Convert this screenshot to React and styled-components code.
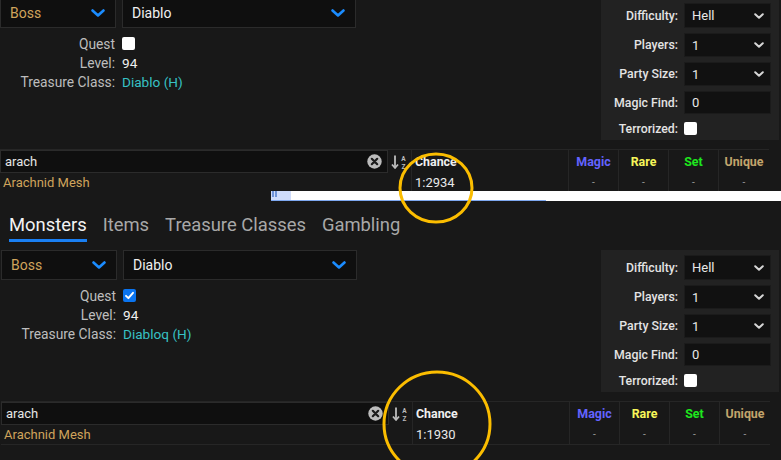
import React from 'react';
import styled, { createGlobalStyle } from 'styled-components';

const Global = createGlobalStyle`
  html, body { margin: 0; padding: 0; background: #181818; }
  body {
    font-family: Roboto, "Noto Sans", "Liberation Sans", sans-serif;
    font-size: 13px;
    color: #c4c4c4;
    overflow: hidden;
  }
  * { box-sizing: border-box; }
`;

const Page = styled.div`
  position: relative;
  width: 781px;
  height: 460px;
  overflow: hidden;
  background: #181818;
  display: flex;
  flex-direction: column;
`;

const Shot = styled.section`
  flex: none;
  height: ${(p) => p.$h}px;
  overflow: hidden;
  padding-left: ${(p) => p.$shift || 0}px;
`;

const Body = styled.div`
  margin-top: ${(p) => p.$offset || 0}px;
  display: flex;
  flex-direction: column;
`;

/* ---------- tabs ---------- */
const TabBar = styled.nav`
  height: 49px;
  display: flex;
  align-items: flex-start;
  gap: 16px;
  padding: 12px 0 0 8px;
`;
const Tab = styled.div`
  font-size: 18.4px;
  line-height: 23px;
  padding-bottom: 3px;
  color: ${(p) => (p.$active ? '#f3f3f3' : '#a8a8a8')};
  border-bottom: 3px solid ${(p) => (p.$active ? '#1a7ff2' : 'transparent')};
`;

/* ---------- upper area ---------- */
const Upper = styled.div`
  height: 151px;
  display: flex;
  align-items: flex-start;
  justify-content: space-between;
`;
const LeftCol = styled.div`
  width: 356px;
  display: flex;
  flex-direction: column;
`;
const SelectRow = styled.div`
  display: grid;
  grid-template-columns: 116px 234px;
  column-gap: 6px;
  height: 30px;
`;
const Select = styled.div`
  display: flex;
  align-items: center;
  justify-content: space-between;
  padding: 0 10px 0 9px;
  background: #0f0f0f;
  border: 1px solid #2b2b2b;
  font-size: 14px;
  color: ${(p) => p.$color || '#f0f0f0'};
`;
const InfoGrid = styled.div`
  margin-top: 6px;
  display: grid;
  grid-template-columns: 116px auto;
  column-gap: 6px;
  grid-auto-rows: 19px;
  align-items: center;
`;
const Label = styled.div`
  text-align: right;
  padding-right: 1px;
  color: #bdbdbd;
  font-size: 13.8px;
`;
const Value = styled.div`
  display: flex;
  align-items: center;
  color: ${(p) => p.$color || '#f0f0f0'};
  font-size: 13.6px;
`;

const Panel = styled.div`
  width: 178px;
  height: 142px;
  margin-right: 2px;
  background: #222222;
  padding: 5px 8px 0 0;
  display: grid;
  grid-template-columns: 1fr 87px;
  grid-template-rows: 25px 24px 24px 23px 19px;
  column-gap: 6px;
  row-gap: 5px;
  align-items: center;
`;
const PanelLabel = styled.div`
  text-align: right;
  color: #e4e4e4;
  font-size: 12.3px;
  font-weight: 500;
`;
const SmallSelect = styled.div`
  height: 100%;
  display: flex;
  align-items: center;
  justify-content: space-between;
  padding: 0 6px 0 7px;
  background: #111111;
  border: 1px solid #1b1b1b;
  color: #e8e8e8;
  font-size: 13px;
`;

const Box = styled.span`
  width: 13px;
  height: 13px;
  border-radius: 2px;
  background: ${(p) => (p.$checked ? '#0a74f0' : '#ffffff')};
  display: inline-flex;
  align-items: center;
  justify-content: center;
`;

/* ---------- table ---------- */
const Table = styled.div`
  width: 769px;
  display: grid;
  grid-template-columns: 388px 23px 157px 50px 50px 50px 51px;
  grid-template-rows: 23px 20px;
  border-top: 1px solid #262626;
`;
const SearchCell = styled.div`
  display: flex;
  align-items: center;
  justify-content: space-between;
  padding: 0 5px 0 4px;
  background: #0f0f0f;
  border: 1px solid #2b2b2b;
  color: #e6e6e6;
  font-size: 13px;
`;
const SortCell = styled.div`
  display: flex;
  align-items: center;
  justify-content: center;
`;
const HeadCell = styled.div`
  display: flex;
  align-items: center;
  justify-content: ${(p) => (p.$left ? 'flex-start' : 'center')};
  padding-left: ${(p) => (p.$left ? '3px' : '0')};
  border-left: 1px solid #262626;
  font-weight: 700;
  font-size: 12.4px;
  color: ${(p) => p.$color || '#f0f0f0'};
`;
const Cell = styled.div`
  display: flex;
  align-items: center;
  justify-content: ${(p) => (p.$left ? 'flex-start' : 'center')};
  padding-left: ${(p) => (p.$left ? '3px' : '0')};
  border-left: ${(p) => (p.$noBorder ? 'none' : '1px solid #262626')};
  border-bottom: 1px solid #262626;
  font-size: ${(p) => (p.$dash ? '10px' : '13px')};
  color: ${(p) => p.$color || '#e8e8e8'};
  grid-column: ${(p) => p.$span || 'auto'};
`;

/* ---------- strip between shots ---------- */
const Strip = styled.div`
  flex: none;
  height: 10px;
  display: flex;
`;
const StripGap = styled.div`
  width: 271px;
  background: #181818;
`;
const StripThumb = styled.div`
  width: 20px;
  background: #cfdcfb;
  border-bottom: 1px solid #7ea8f0;
  display: flex;
  gap: 1px;
  padding-left: 1px;
`;
const ThumbBar = styled.span`
  width: 2px;
  height: 6px;
  background: #6f93d8;
`;
const StripTrack = styled.div`
  width: 255px;
  background: #ffffff;
  border-bottom: 1px solid #7ea8f0;
`;
const StripRest = styled.div`
  flex: 1;
  background: #ffffff;
`;

const Annotations = styled.svg`
  position: absolute;
  left: 0;
  top: 0;
  pointer-events: none;
`;

/* ---------- icons ---------- */
const BlueChevron = () => (
  <svg width="14" height="8" viewBox="0 0 14 8">
    <path d="M1.5 1.5 L7 6.5 L12.5 1.5" fill="none" stroke="#1b8cff" strokeWidth="2.6" strokeLinecap="round" strokeLinejoin="round" />
  </svg>
);
const SmallChevron = () => (
  <svg width="10" height="6" viewBox="0 0 10 6">
    <path d="M1.2 1.2 L5 4.8 L8.8 1.2" fill="none" stroke="#d6d6d6" strokeWidth="2" strokeLinecap="round" strokeLinejoin="round" />
  </svg>
);
const Check = () => (
  <svg width="11" height="11" viewBox="0 0 11 11">
    <path d="M2 5.8 L4.4 8.2 L9 2.8" fill="none" stroke="#ffffff" strokeWidth="1.9" strokeLinecap="round" strokeLinejoin="round" />
  </svg>
);
const ClearIcon = () => (
  <svg width="15" height="15" viewBox="0 0 15 15">
    <circle cx="7.5" cy="7.5" r="7.2" fill="#bcbcbc" />
    <path d="M4.8 4.8 L10.2 10.2 M10.2 4.8 L4.8 10.2" stroke="#1c1c1c" strokeWidth="2.2" strokeLinecap="round" />
  </svg>
);
const SortIcon = () => (
  <svg width="18" height="16" viewBox="0 0 18 16">
    <path d="M4 1.5 V13.5" stroke="#bdbdbd" strokeWidth="1.8" />
    <path d="M1 10.5 L4 14 L7 10.5" fill="none" stroke="#bdbdbd" strokeWidth="1.8" strokeLinejoin="round" />
    <text x="12.5" y="6.5" fontSize="6.5" fontWeight="700" fill="#bdbdbd" textAnchor="middle" fontFamily="Roboto, sans-serif">A</text>
    <text x="12.5" y="14.5" fontSize="6.5" fontWeight="700" fill="#bdbdbd" textAnchor="middle" fontFamily="Roboto, sans-serif">Z</text>
  </svg>
);

const Checkbox = ({ checked }) => <Box $checked={checked}>{checked && <Check />}</Box>;

const Calculator = ({ quest, tc, chance }) => (
  <>
    <Upper>
      <LeftCol>
        <SelectRow>
          <Select $color="#cfa45c">Boss<BlueChevron /></Select>
          <Select>Diablo<BlueChevron /></Select>
        </SelectRow>
        <InfoGrid>
          <Label>Quest</Label>
          <Value><Checkbox checked={quest} /></Value>
          <Label>Level:</Label>
          <Value>94</Value>
          <Label>Treasure Class:</Label>
          <Value $color="#37c1c4">{tc}</Value>
        </InfoGrid>
      </LeftCol>
      <Panel>
        <PanelLabel>Difficulty:</PanelLabel>
        <SmallSelect>Hell<SmallChevron /></SmallSelect>
        <PanelLabel>Players:</PanelLabel>
        <SmallSelect>1<SmallChevron /></SmallSelect>
        <PanelLabel>Party Size:</PanelLabel>
        <SmallSelect>1<SmallChevron /></SmallSelect>
        <PanelLabel>Magic Find:</PanelLabel>
        <SmallSelect>0</SmallSelect>
        <PanelLabel>Terrorized:</PanelLabel>
        <Value><Checkbox /></Value>
      </Panel>
    </Upper>
    <Table>
      <SearchCell>arach<ClearIcon /></SearchCell>
      <SortCell><SortIcon /></SortCell>
      <HeadCell $left>Chance</HeadCell>
      <HeadCell $color="#6363ff">Magic</HeadCell>
      <HeadCell $color="#f6f65a">Rare</HeadCell>
      <HeadCell $color="#1ee61e">Set</HeadCell>
      <HeadCell $color="#c2a46c">Unique</HeadCell>
      <Cell $left $noBorder $span="1 / span 2" $color="#cfa45c">Arachnid Mesh</Cell>
      <Cell $left>{chance}</Cell>
      <Cell $dash $color="#9a9a9a">-</Cell>
      <Cell $dash $color="#9a9a9a">-</Cell>
      <Cell $dash $color="#9a9a9a">-</Cell>
      <Cell $dash $color="#9a9a9a">-</Cell>
    </Table>
  </>
);

export default function App() {
  return (
    <Page>
      <Global />
      <Shot $h={191}>
        <Body $offset={-2}>
          <Calculator quest={false} tc="Diablo (H)" chance="1:2934" />
        </Body>
      </Shot>
      <Strip>
        <StripGap />
        <StripThumb><ThumbBar /><ThumbBar /></StripThumb>
        <StripTrack />
        <StripRest />
      </Strip>
      <Shot $h={259} $shift={1}>
        <TabBar>
          <Tab $active>Monsters</Tab>
          <Tab>Items</Tab>
          <Tab>Treasure Classes</Tab>
          <Tab>Gambling</Tab>
        </TabBar>
        <Body>
          <Calculator quest tc="Diabloq (H)" chance="1:1930" />
        </Body>
      </Shot>
      <Annotations width="781" height="460" viewBox="0 0 781 460">
        <ellipse cx="436" cy="188" rx="36" ry="34" fill="none" stroke="#fbbd00" strokeWidth="3" />
        <ellipse cx="437" cy="424" rx="53" ry="52" fill="none" stroke="#fbbd00" strokeWidth="3" />
      </Annotations>
    </Page>
  );
}
